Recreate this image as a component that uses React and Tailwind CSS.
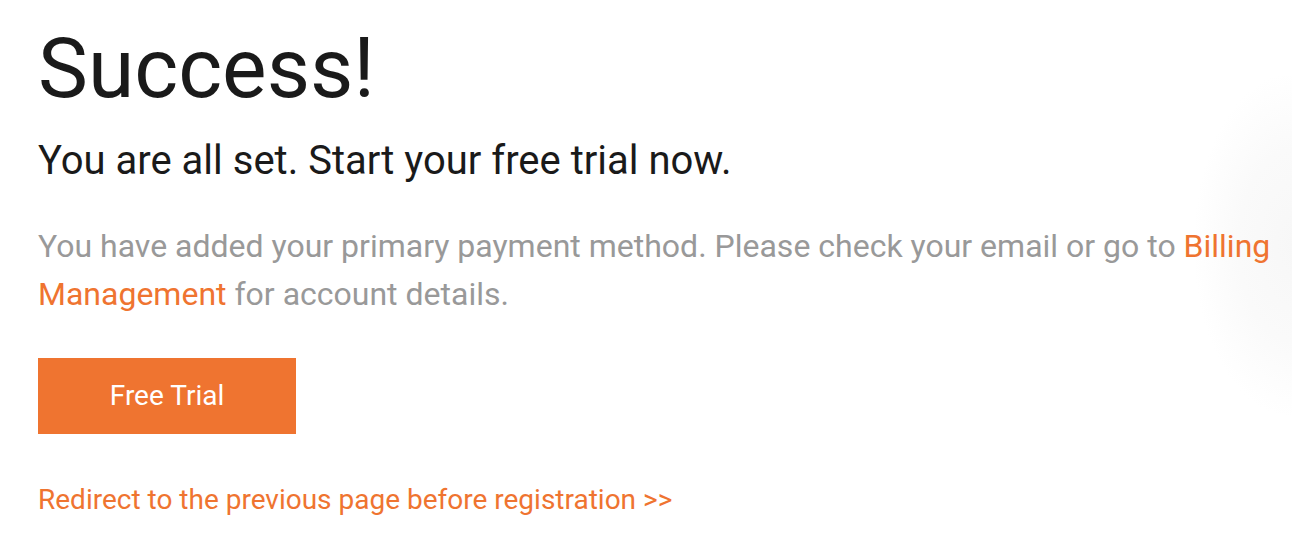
export default function App() {
  return (
    <div className="relative w-[1292px] h-[560px] overflow-hidden bg-white font-['Roboto',sans-serif]">
      <div className="pointer-events-none absolute left-[1195px] top-[75px] w-[200px] h-[340px] rounded-[45%] bg-[radial-gradient(ellipse_at_center,#f7f7f7_0%,#fafafa_40%,#ffffff_72%)]" />
      <div className="relative pl-[38px] pt-[19px]">
        <h1 className="text-[84px] leading-[100px] text-[#1a1a1a] font-normal">Success!</h1>
        <h2 className="mt-[18px] text-[40px] leading-[48px] text-[#1a1a1a] font-normal">You are all set. Start your free trial now.</h2>
        <p className="mt-[37px] w-[1245px] text-[32px] leading-[48px] text-[#999999]">
          You have added your primary payment method. Please check your email or go to{" "}
          <a className="text-[#ef7430]">Billing Management</a> for account details.
        </p>
        <button className="mt-[40px] block w-[258px] h-[76px] bg-[#ef7430] text-white text-[28px] leading-[32px]">Free Trial</button>
        <div className="mt-[46px] text-[28px] leading-[40px] text-[#ef7430]">Redirect to the previous page before registration &gt;&gt;</div>
      </div>
    </div>
  );
}
